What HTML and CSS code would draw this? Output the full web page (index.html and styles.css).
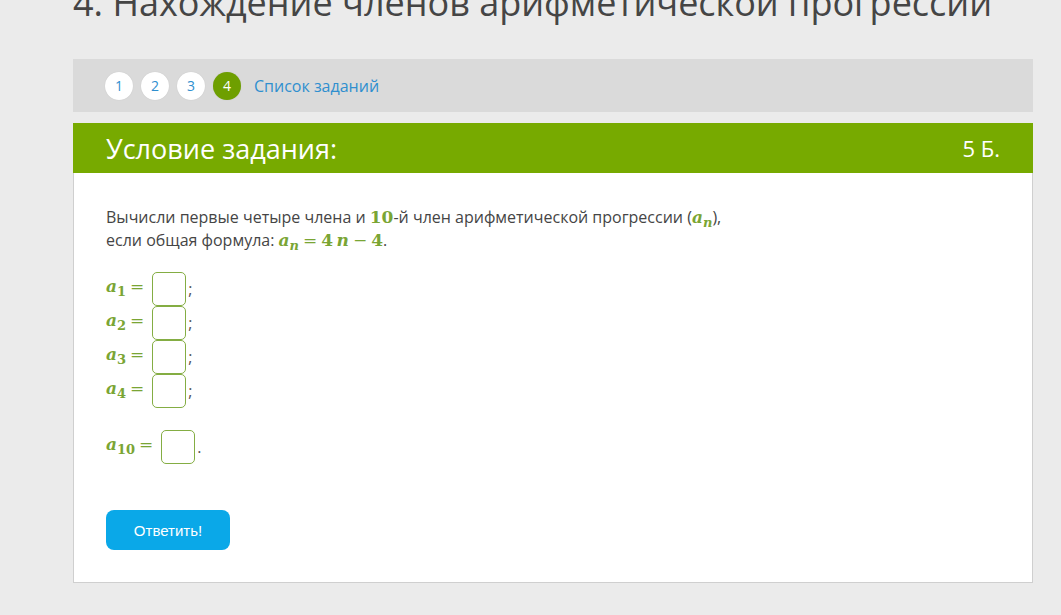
FILE: index.html
```html
<!DOCTYPE html>
<html lang="ru">
<head>
  <meta charset="UTF-8">
  <title>4. Нахождение членов арифметической прогрессии</title>
  <link rel="stylesheet" href="styles.css">
</head>
<body>
  <div class="page">
    <h1 class="title">4. Нахождение членов арифметической прогрессии</h1>

    <div class="steps">
      <a class="step">1</a>
      <a class="step">2</a>
      <a class="step">3</a>
      <a class="step current">4</a>
      <a class="steps-link">Список заданий</a>
    </div>

    <div class="task">
      <div class="task-head">
        <span class="task-title">Условие задания:</span>
        <span class="task-points">5 Б.</span>
      </div>
      <div class="task-body">
        <p class="question">
          Вычисли первые четыре члена и <span class="m m-num">10</span>-й член арифметической прогрессии (<span class="m"><i>a</i><sub><i>n</i></sub></span>),<br>
          если общая формула: <span class="m"><i>a</i><sub><i>n</i></sub><span class="op">=</span>4&thinsp;<i>n</i><span class="op">−</span>4</span>.
        </p>

        <div class="answers">
          <div class="answer"><span class="m lhs"><i>a</i><sub>1</sub><span class="op">=</span></span><input class="box" type="text"><span class="sep">;</span></div>
          <div class="answer"><span class="m lhs"><i>a</i><sub>2</sub><span class="op">=</span></span><input class="box" type="text"><span class="sep">;</span></div>
          <div class="answer"><span class="m lhs"><i>a</i><sub>3</sub><span class="op">=</span></span><input class="box" type="text"><span class="sep">;</span></div>
          <div class="answer"><span class="m lhs"><i>a</i><sub>4</sub><span class="op">=</span></span><input class="box" type="text"><span class="sep">;</span></div>
        </div>

        <div class="answer answer-last"><span class="m lhs"><i>a</i><sub>10</sub><span class="op">=</span></span><input class="box" type="text"><span class="sep">.</span></div>

        <button class="submit" type="button">Ответить!</button>
      </div>
    </div>
  </div>
</body>
</html>
```

FILE: styles.css
```css
body {
  background: #ebebeb;
  font-family: 'Open Sans', 'Noto Sans', sans-serif;
  margin: 0;
  padding: 0;
  color: #444;
}
.page {
  width: 960px;
  margin-left: 73px;
}
.title {
  font-size: 36px;
  font-weight: 400;
  line-height: 44px;
  color: #454545;
  margin: -19px 0 0 0;
  white-space: nowrap;
}
.steps {
  margin-top: 34px;
  height: 53px;
  background: #dadada;
  display: flex;
  align-items: center;
  padding-left: 32px;
  gap: 8px;
}
.step {
  width: 28px;
  height: 28px;
  border-radius: 50%;
  background: #fff;
  color: #2f8fcf;
  font-size: 14px;
  display: flex;
  align-items: center;
  justify-content: center;
  box-shadow: 0 0 1px rgba(0,0,0,0.15);
}
.step.current {
  background: #6e9f00;
  color: #fff;
}
.steps-link {
  color: #2f8fcf;
  font-size: 16px;
  margin-left: 5px;
}
.task {
  margin-top: 11px;
  background: #fff;
  border: 1px solid #cfcfcf;
  border-top: none;
}
.task-head {
  background: #77aa00;
  height: 50px;
  margin: 0 -1px;
  padding: 0 33px;
  display: flex;
  align-items: center;
  justify-content: space-between;
  color: #fff;
}
.task-title {
  font-size: 27px;
}
.task-points {
  font-size: 22px;
}
.task-body {
  padding: 33px 32px 32px 32px;
}
.question {
  margin: 0;
  font-size: 16px;
  line-height: 23px;
  color: #454545;
}
.m {
  font-family: 'DejaVu Serif', 'Liberation Serif', serif;
  font-weight: bold;
  color: #7aa534;
  font-size: 17px;
  line-height: 0;
}
.m sub {
  font-size: 13px;
  line-height: 0;
  vertical-align: -4px;
}
.op {
  margin: 0 4px;
  font-weight: normal;
}
.answers {
  margin-top: 20px;
}
.answer {
  display: flex;
  align-items: center;
  height: 34px;
}
.lhs {
  margin-right: 8px;
}
.lhs .op {
  margin-right: 0;
}
.box {
  width: 34px;
  height: 34px;
  box-sizing: border-box;
  border: 1px solid #84ad43;
  border-radius: 5px;
  background: #fff;
  margin: 0;
  padding: 0;
}
.sep {
  margin-left: 2px;
  font-size: 16px;
  color: #555;
}
.answer-last {
  margin-top: 22px;
}
.submit {
  display: block;
  margin-top: 46px;
  width: 124px;
  height: 40px;
  border: none;
  border-radius: 8px;
  background: #0aa8e8;
  color: #fff;
  font-family: 'Liberation Sans', Arial, sans-serif;
  font-size: 15px;
  cursor: pointer;
}
```
